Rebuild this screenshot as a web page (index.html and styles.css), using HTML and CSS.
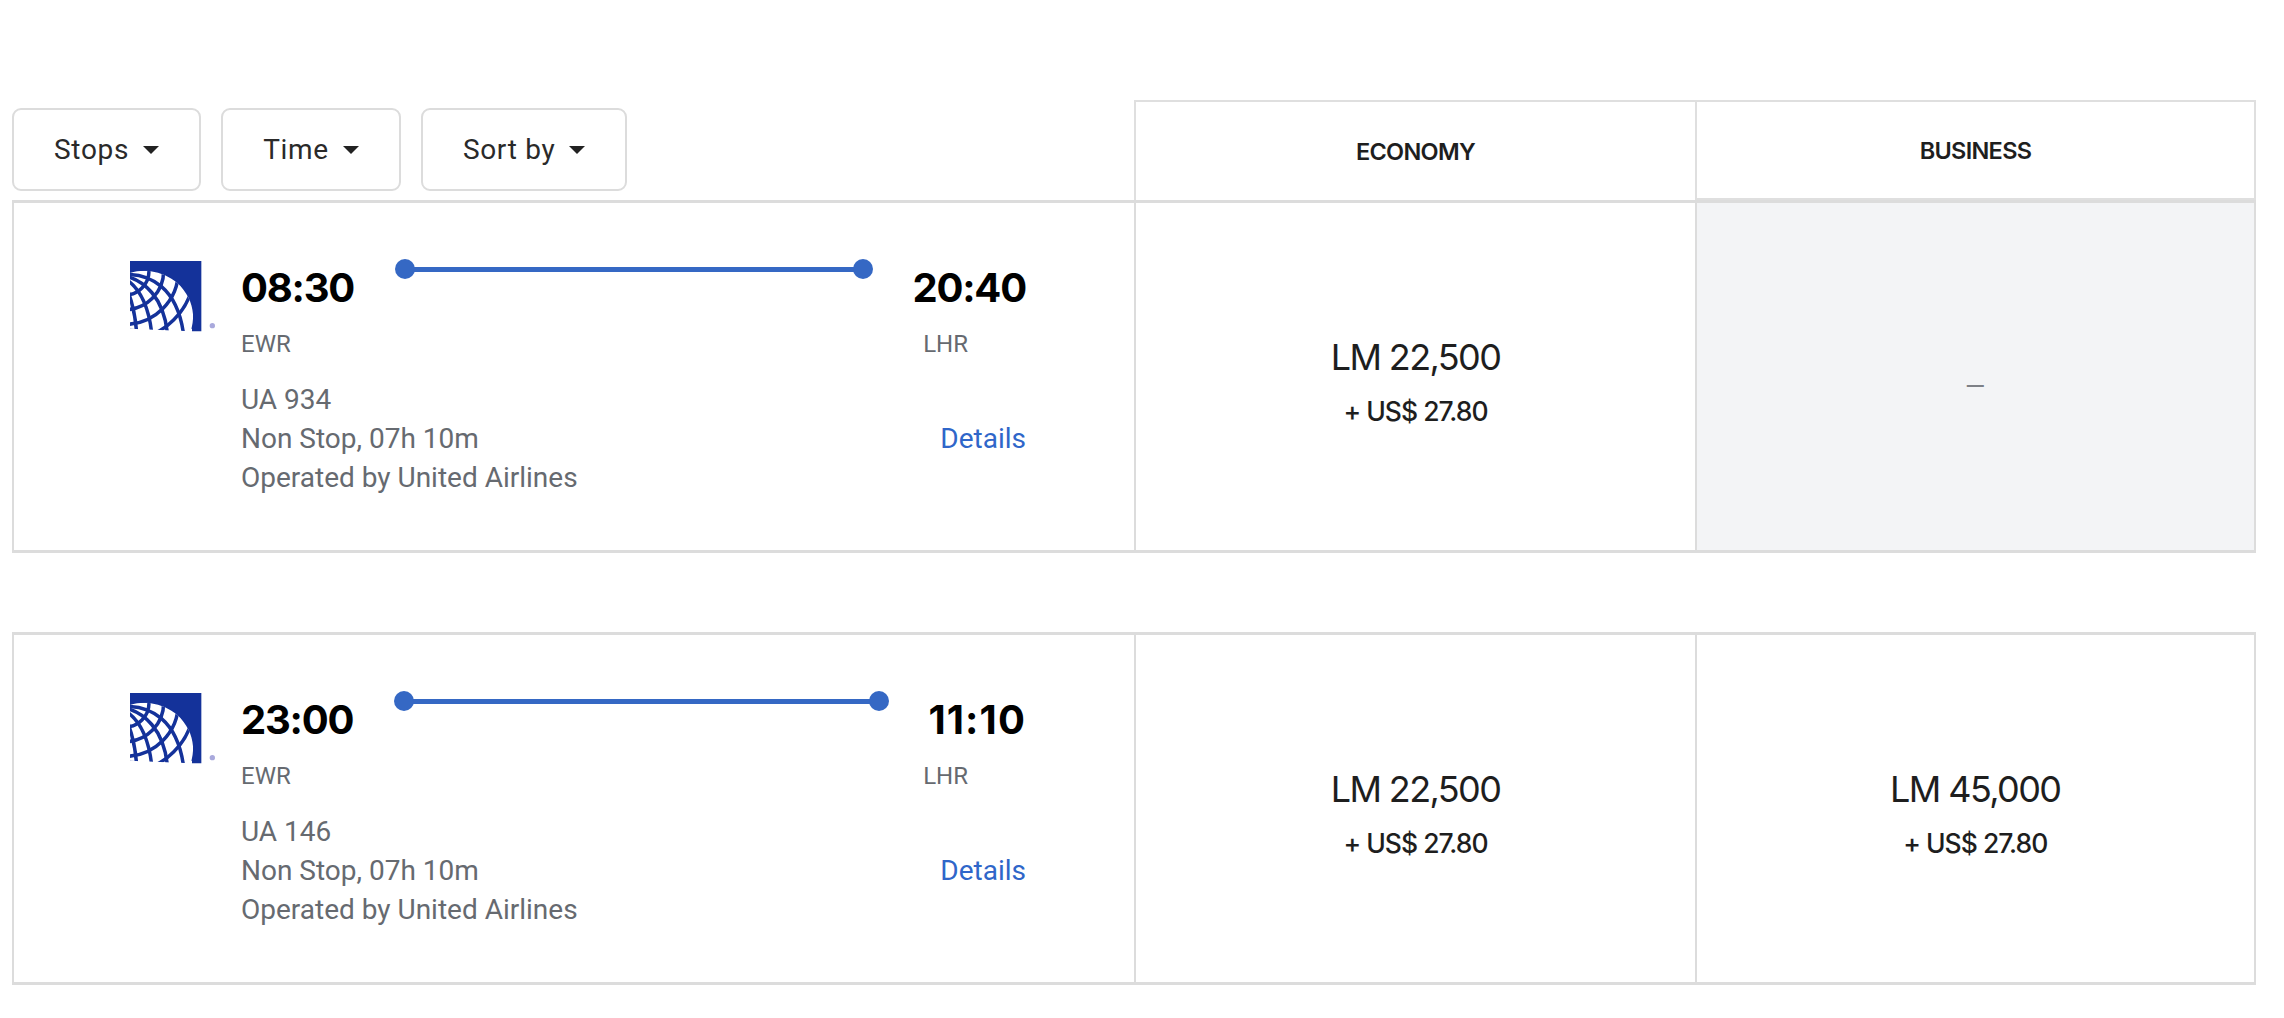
FILE: index.html
```html
<!DOCTYPE html>
<html lang="en">
<head>
<meta charset="utf-8">
<title>Flights</title>
<link rel="stylesheet" href="styles.css">
</head>
<body>
<svg class="defs" width="0" height="0" aria-hidden="true">
  <defs>
    <clipPath id="globe"><path d="M0 36C20 30 42 28 62 31C92 35 120 48 142 66C170 92 187 125 189 160C190 178 187 195 182 211L0 203Z"/></clipPath>
    <symbol id="ua" viewBox="0 0 260 225">
      <path fill="#14329a" d="M0 0H214V211H186V203H0Z"/>
      <g clip-path="url(#globe)">
        <rect x="0" y="20" width="200" height="195" fill="#fff"/>
        <g fill="none" stroke="#14329a" stroke-width="10.5">
          <circle cx="-15" cy="30" r="72"/>
          <circle cx="-15" cy="30" r="116"/>
          <circle cx="-15" cy="30" r="160"/>
          <circle cx="-15" cy="30" r="207"/>
          <path d="M-10 40C60 40 140 78 160 215"/>
          <path d="M-10 46C40 60 100 105 112 215"/>
          <path d="M-10 56C25 80 55 130 65 215"/>
          <path d="M-10 80C0 105 15 145 20 215"/>
        </g>
      </g>
      <circle cx="247" cy="194" r="8" fill="#a9a9dc"/>
    </symbol>
  </defs>
</svg>
<main class="page">
  <div class="head">
    <div class="filters">
      <button class="filter">Stops<span class="caret"></span></button>
      <button class="filter">Time<span class="caret"></span></button>
      <button class="filter">Sort by<span class="caret"></span></button>
    </div>
    <div class="cabin cabin-eco">ECONOMY</div>
    <div class="cabin cabin-biz">BUSINESS</div>
  </div>

  <section class="row">
    <div class="flight">
      <svg class="logo"><use href="#ua"/></svg>
      <div class="info">
        <div class="times">
          <div class="time">08:30</div>
          <div class="route"></div>
          <div class="time">20:40</div>
        </div>
        <div class="airports"><span>EWR</span><span class="arr">LHR</span></div>
        <div class="meta">
          <div class="lines">UA 934<br>Non Stop, 07h 10m<br>Operated by United Airlines</div>
          <a class="details" href="#">Details</a>
        </div>
      </div>
    </div>
    <div class="fare">
      <div class="miles">LM 22,500</div>
      <div class="cash">+ US$ 27.80</div>
    </div>
    <div class="fare fare-none">—</div>
  </section>

  <section class="row">
    <div class="flight">
      <svg class="logo"><use href="#ua"/></svg>
      <div class="info">
        <div class="times">
          <div class="time">23:00</div>
          <div class="route"></div>
          <div class="time time-ones">11:10</div>
        </div>
        <div class="airports"><span>EWR</span><span class="arr">LHR</span></div>
        <div class="meta">
          <div class="lines">UA 146<br>Non Stop, 07h 10m<br>Operated by United Airlines</div>
          <a class="details" href="#">Details</a>
        </div>
      </div>
    </div>
    <div class="fare">
      <div class="miles">LM 22,500</div>
      <div class="cash">+ US$ 27.80</div>
    </div>
    <div class="fare">
      <div class="miles">LM 45,000</div>
      <div class="cash">+ US$ 27.80</div>
    </div>
  </section>
</main>
</body>
</html>
```
FILE: styles.css
```css
* { box-sizing: border-box; }
html, body { margin: 0; background: #fff; }
body { font-family: Roboto, "Liberation Sans", sans-serif; color: #1e1e1e; }
.defs { display: block; height: 0; }

.page { width: 2244px; margin: 0 0 0 12px; padding-top: 100px; }

.head { display: flex; align-items: flex-end; height: 100px; }
.filters { width: 1122px; display: flex; gap: 20px; align-self: flex-start; padding-top: 8px; }
.filter {
  display: flex; align-items: center; gap: 14px;
  height: 83px; padding: 0 40px;
  background: #fff; border: 2.5px solid #dcdcdc; border-radius: 9px;
  font: 400 28px Roboto, sans-serif; letter-spacing: 0.7px; color: #2a2a2a;
}
.caret { width: 0; height: 0; border-left: 8px solid transparent; border-right: 8px solid transparent; border-top: 8px solid #222; }

.cabin {
  display: flex; align-items: center; justify-content: center;
  border: 2.5px solid #dfdfdf; border-bottom: 0;
  font: 600 23.5px Inter, sans-serif; letter-spacing: -0.7px; color: #1e1e1e;
}
.cabin-eco { width: 563px; height: 100px; padding-top: 1px; }
.cabin-biz { width: 559px; height: 100px; border-left: 0; border-bottom: 2px solid #dfdfdf; }

.row {
  display: flex; height: 353px;
  border: 3px solid #dcdcdc; border-right-width: 2.5px; border-left-width: 2px;
}
.row + .row { margin-top: 79px; }

.flight { width: 1120px; display: flex; padding: 58px 0 0 116.3px; }
.logo { width: 86.7px; height: 75px; flex: none; margin-right: 24px; }
.info { width: 785px; }
.times { display: flex; height: 60px; margin-top: -3px; }
.time { font: 700 40px/60px Inter, sans-serif; letter-spacing: -1.2px; color: #000; }
.time-ones { letter-spacing: 1.1px; }
.route { position: relative; flex: 1; height: 5px; margin: 9px 49px 0 51px; background: #3568c4; }
.route::before, .route::after {
  content: ""; position: absolute; top: -8px; width: 20px; height: 20px;
  border-radius: 50%; background: #3568c4;
}
.route::before { left: -10px; }
.route::after { right: -10px; }

.airports { display: flex; justify-content: space-between; margin-top: 12px; font-size: 24px; line-height: 28px; color: #666a70; }
.arr { margin-right: 58px; }

.meta { display: flex; justify-content: space-between; align-items: center; margin-top: 22px; font-size: 28px; line-height: 39px; }
.lines { color: #666a70; }
.details { color: #2f66c9; text-decoration: none; }

.fare {
  flex: none; width: 561px; display: flex; flex-direction: column; align-items: center; justify-content: center;
  border-left: 2.5px solid #dcdcdc; padding-top: 11px;
}
.fare + .fare { width: 558.5px; }
.fare-none { background: #f3f4f6; color: #7d8086; font-size: 26px; padding-top: 18px; }
.miles { font: 400 36px/48px Inter, sans-serif; letter-spacing: -1.6px; color: #1e1e1e; }
.cash { font: 500 26.5px/40px Inter, sans-serif; letter-spacing: -1px; color: #1e1e1e; margin-top: 10px; }
```
